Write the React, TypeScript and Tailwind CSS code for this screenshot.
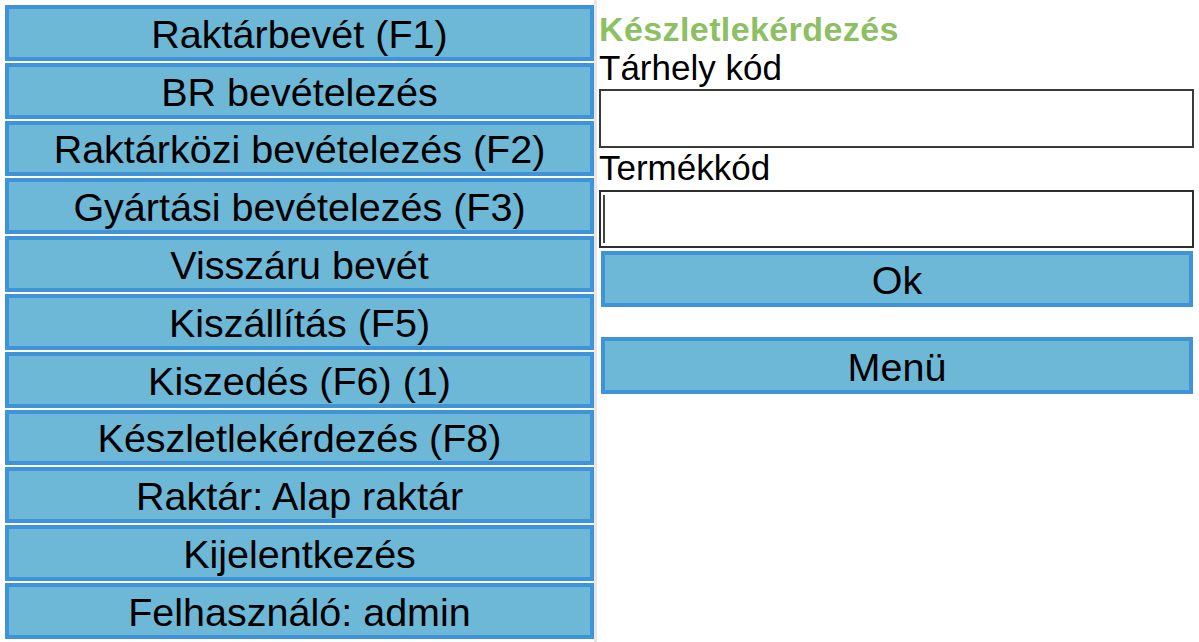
import React from 'react';

const menuItems = [
  'Raktárbevét (F1)',
  'BR bevételezés',
  'Raktárközi bevételezés (F2)',
  'Gyártási bevételezés (F3)',
  'Visszáru bevét',
  'Kiszállítás (F5)',
  'Kiszedés (F6) (1)',
  'Készletlekérdezés (F8)',
  'Raktár: Alap raktár',
  'Kijelentkezés',
  'Felhasználó: admin',
];

const font = { fontFamily: '"Liberation Sans", Arial, sans-serif' };

export default function App() {
  return (
    <div className="flex h-[642px] w-[1199px] bg-white text-black overflow-hidden" style={font}>
      {/* left menu */}
      <div className="flex w-[594px] flex-col gap-[2px] pl-[5px] pt-[5px]">
        {menuItems.map((item) => (
          <button
            key={item}
            className="flex h-[55.8px] w-full items-center justify-center border-4 border-[#3f93d9] bg-[#6db7d7] pt-[2px] text-[39.5px] leading-[44px] text-black"
          >
            {item}
          </button>
        ))}
      </div>
      <div className="w-[3px] bg-[#e6e6e6]" />

      {/* right panel */}
      <div className="flex w-[597px] flex-col pl-[2px]">
        <h2 className="mt-[10px] text-[34px] font-bold leading-[38px] tracking-[0.4px] text-[#8cc063]">
          Készletlekérdezés
        </h2>
        <label className="text-[35px] leading-[40px]">Tárhely kód</label>
        <input className="mt-[1px] h-[59px] w-full border-2 border-[#3a3a3a] bg-white px-1 outline-none" />
        <label className="text-[35px] leading-[40px]">Termékkód</label>
        <div className="relative mt-[2px]">
          <input className="h-[58px] w-full border-2 border-[#2e2e2e] bg-white px-1 outline-none" />
          <span className="absolute left-[4px] top-[5px] h-[48px] w-[2px] bg-[#444]" />
        </div>
        <button className="ml-[2px] mr-[1px] mt-[3px] flex h-[56px] items-center justify-center border-4 border-[#3f93d9] bg-[#6db7d7] pt-[2px] text-[39.5px] leading-[44px]">
          Ok
        </button>
        <button className="ml-[2px] mr-[1px] mt-[30px] flex h-[57px] items-center justify-center border-4 border-[#3f93d9] bg-[#6db7d7] pt-[2px] text-[39.5px] leading-[44px]">
          Menü
        </button>
      </div>
    </div>
  );
}
